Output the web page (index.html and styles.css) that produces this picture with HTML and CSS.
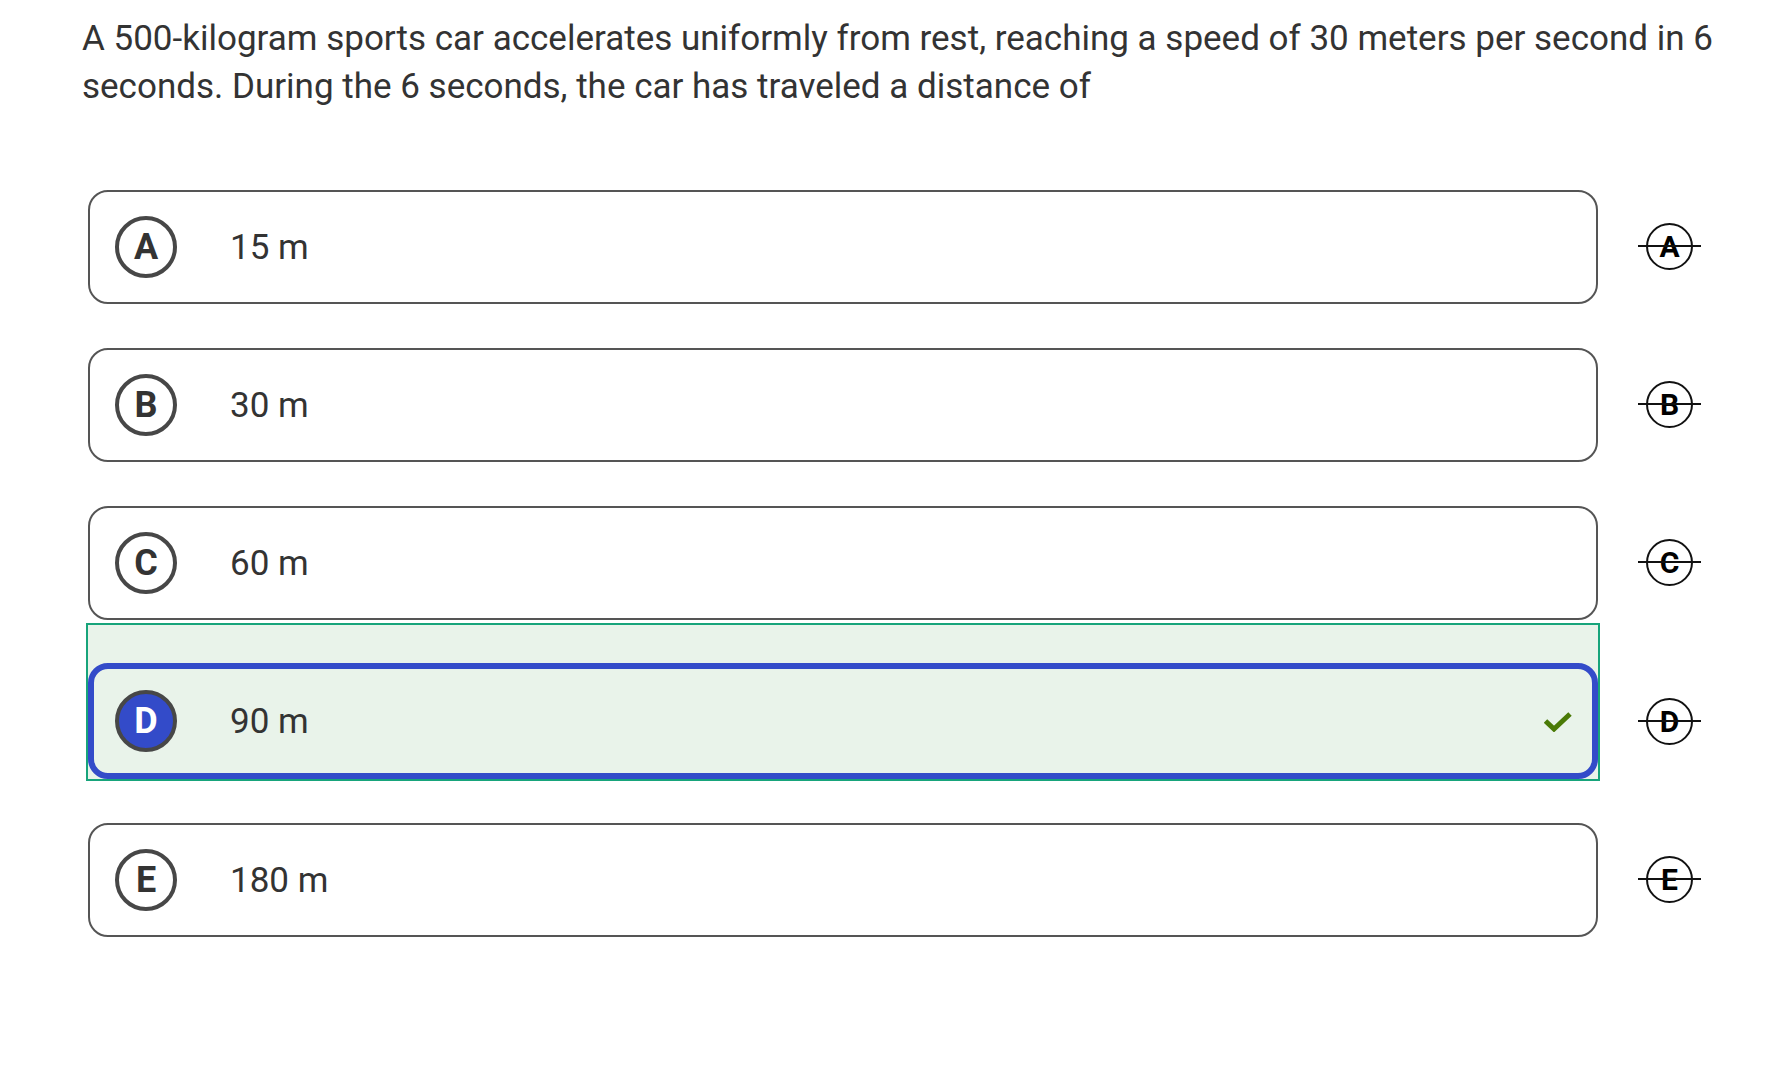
FILE: index.html
```html
<!DOCTYPE html>
<html lang="en">
<head>
<meta charset="utf-8">
<title>Question</title>
<link rel="stylesheet" href="styles.css">
</head>
<body>
<main class="page">
  <p class="question">A 500-kilogram sports car accelerates uniformly from rest, reaching a speed of 30 meters per second in 6 seconds. During the 6 seconds, the car has traveled a distance of</p>
  <div class="options">
    <div class="row">
      <div class="wrap">
        <div class="box"><span class="letter">A</span><span class="answer">15 m</span></div>
      </div>
      <div class="strike-cell"><span class="strike">A</span></div>
    </div>
    <div class="row">
      <div class="wrap">
        <div class="box"><span class="letter">B</span><span class="answer">30 m</span></div>
      </div>
      <div class="strike-cell"><span class="strike">B</span></div>
    </div>
    <div class="row">
      <div class="wrap">
        <div class="box"><span class="letter">C</span><span class="answer">60 m</span></div>
      </div>
      <div class="strike-cell"><span class="strike">C</span></div>
    </div>
    <div class="row">
      <div class="wrap wrap-correct">
        <div class="box box-selected"><span class="letter letter-selected">D</span><span class="answer">90 m</span>
          <svg class="check" width="28" height="20" viewBox="0 0 28 20"><polyline points="1.5,9 10,17 26,2" fill="none" stroke="#4a7a06" stroke-width="5"/></svg>
        </div>
      </div>
      <div class="strike-cell"><span class="strike">D</span></div>
    </div>
    <div class="row">
      <div class="wrap">
        <div class="box"><span class="letter">E</span><span class="answer">180 m</span></div>
      </div>
      <div class="strike-cell"><span class="strike">E</span></div>
    </div>
  </div>
</main>
</body>
</html>
```
FILE: styles.css
```css
* { box-sizing: border-box; }
html, body { margin: 0; padding: 0; background: #ffffff; }
body { font-family: Roboto, "Liberation Sans", Arial, sans-serif; color: #333333; }
.page { padding-top: 15px; }
.question {
  margin: 0 0 0 82px;
  width: 1650px;
  font-size: 35px;
  line-height: 48px;
  color: #333333;
}
.options {
  margin-top: 38px;
  margin-left: 86px;
  display: flex;
  flex-direction: column;
  gap: 1px;
}
.row {
  display: flex;
  align-items: flex-end;
}
.wrap {
  width: 1514px;
  border: 2px solid transparent;
  padding-top: 39px;
}
.wrap-correct {
  background: #e9f3ea;
  border-color: #17a47b;
}
.box {
  height: 114px;
  border: 2px solid #555555;
  border-radius: 20px;
  display: flex;
  align-items: center;
  padding-left: 25px;
  background: #ffffff;
}
.box-selected {
  border: 6px solid #334bc9;
  padding-left: 21px;
  background: #e9f3ea;
  margin-top: -1px;
  height: 116px;
  padding-right: 20px;
}
.letter {
  width: 62px;
  height: 62px;
  border: 4px solid #474747;
  border-radius: 50%;
  display: flex;
  align-items: center;
  justify-content: center;
  font-weight: 700;
  font-size: 36px;
  color: #333333;
  flex: none;
}
.letter-selected {
  background: #334bc9;
  color: #ffffff;
}
.answer {
  margin-left: 53px;
  font-size: 35px;
  color: #333333;
}
.check {
  margin-left: auto;
  margin-top: 2px;
  display: block;
}
.strike-cell {
  width: 140px;
  height: 114px;
  margin-bottom: 3px;
  display: flex;
  align-items: center;
  padding-left: 46px;
}
.strike {
  position: relative;
  width: 47px;
  height: 47px;
  border: 2px solid #111111;
  border-radius: 50%;
  display: flex;
  align-items: center;
  justify-content: center;
  font-weight: 700;
  font-size: 30px;
  color: #000000;
}
.strike::after {
  content: "";
  position: absolute;
  left: -10px;
  right: -10px;
  top: 50%;
  height: 2px;
  margin-top: -1px;
  background: #111111;
}
```
